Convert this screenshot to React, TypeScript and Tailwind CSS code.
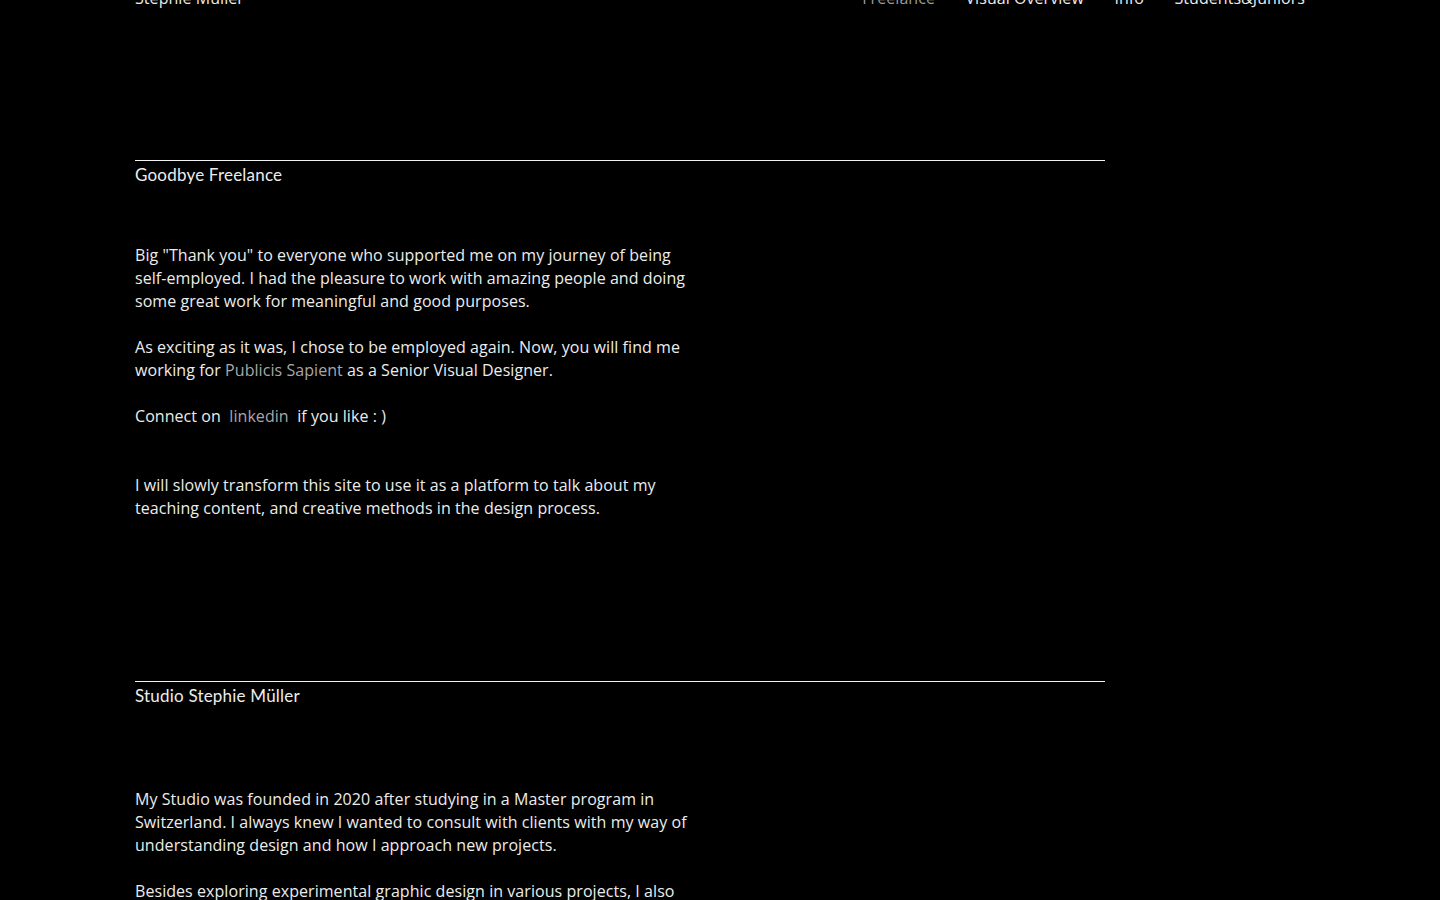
import React from "react";

const body = "font-['Open_Sans',sans-serif] text-[16px] leading-[23px] tracking-[0.06px] text-[#ececec]";
const head = "font-['Lato',sans-serif] text-[17px] leading-[23px] text-[#ececec] tracking-[0.2px]";

export default function App() {
  return (
    <main className="min-h-screen bg-black overflow-hidden">
      <div className="w-[1170px] mx-auto">
        {/* top nav, page scrolled a touch */}
        <nav className={`flex items-center justify-between -mt-[13px] ${body}`}>
          <span>Stephie Müller</span>
          <div className="flex gap-[30.5px]">
            <a className="text-[#9a9a9a]">Freelance</a>
            <a>Visual Overview</a>
            <a>Info</a>
            <a>Students&amp;Juniors</a>
          </div>
        </nav>

        {/* Goodbye Freelance */}
        <section className="mt-[150px] w-[970px] border-t border-[#f2f2f2] pt-[2px]">
          <h2 className={head}>Goodbye Freelance</h2>
          <div className={`mt-[58px] w-[562px] ${body}`}>
            <p className="mb-[23px]">
              Big "Thank you" to everyone who supported me on my journey of being self-employed. I had the pleasure to
              work with amazing people and doing some great work for meaningful and good purposes.
            </p>
            <p className="mb-[23px]">
              As exciting as it was, I chose to be employed again. Now, you will find me working for{" "}
              <a className="text-[#a8a8a8]">Publicis Sapient</a> as a Senior Visual Designer.
            </p>
            <p className="mb-[46px]">
              Connect on&nbsp; <a className="text-[#a8a8a8]">linkedin</a>&nbsp; if you like : )
            </p>
            <p>
              I will slowly transform this site to use it as a platform to talk about my teaching content, and creative
              methods in the design process.
            </p>
          </div>
        </section>

        {/* Studio */}
        <section className="mt-[161px] w-[970px] border-t border-[#f2f2f2] pt-[2px]">
          <h2 className={head}>Studio Stephie Müller</h2>
          <div className={`mt-[81px] w-[562px] ${body}`}>
            <p className="mb-[23px]">
              My Studio was founded in 2020 after studying in a Master program in Switzerland. I always knew I wanted to
              consult with clients with my way of understanding design and how I approach new projects.
            </p>
            <p>
              Besides exploring experimental graphic design in various projects, I also teach and share my knowledge with
              students and juniors who are starting out in the creative field.
            </p>
          </div>
        </section>
      </div>
    </main>
  );
}
